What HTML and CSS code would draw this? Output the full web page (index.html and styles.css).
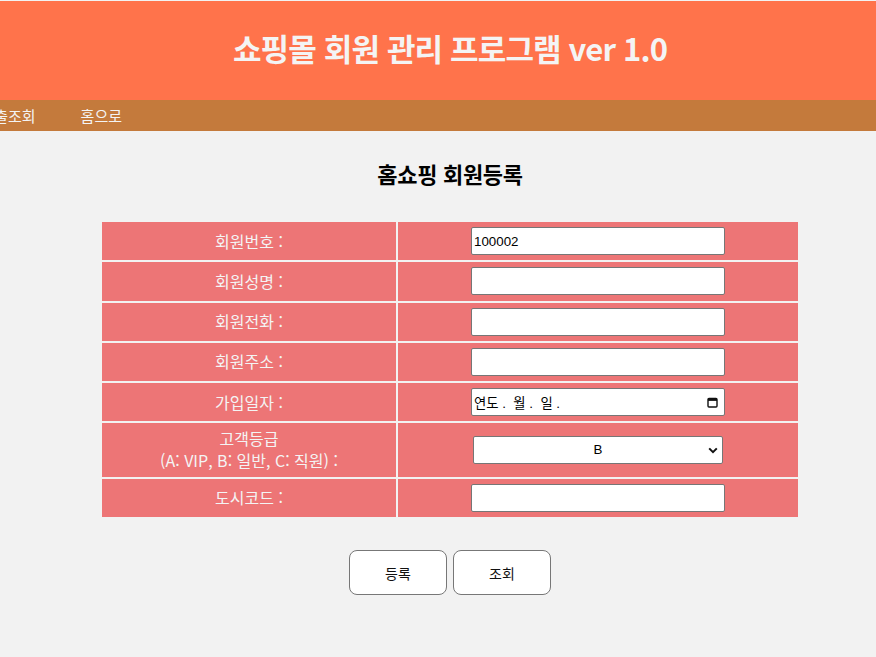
FILE: index.html
```html
<!DOCTYPE html>
<html lang="ko">
<head>
<meta charset="utf-8">
<title>쇼핑몰 회원 관리 프로그램</title>
<link rel="stylesheet" href="styles.css">
</head>
<body>
<div class="page">
  <header class="top">
    <h1 class="title">쇼핑몰 회원 관리 프로그램 ver 1.0</h1>
  </header>
  <nav class="nav">
    <div class="nav-inner">
      <a class="nav-item">회원등록</a>
      <a class="nav-item">회원목록조회/수정</a>
      <a class="nav-item">회원매출조회</a>
      <a class="nav-item">홈으로</a>
    </div>
  </nav>
  <main class="main">
    <h2 class="sub">홈쇼핑 회원등록</h2>
    <form class="form">
      <table class="form-table">
        <tr><th>회원번호 :</th><td><input class="field" type="text" value="100002"></td></tr>
        <tr><th>회원성명 :</th><td><input class="field" type="text"></td></tr>
        <tr><th>회원전화 :</th><td><input class="field" type="text"></td></tr>
        <tr><th>회원주소 :</th><td><input class="field" type="text"></td></tr>
        <tr><th>가입일자 :</th><td>
          <div class="date-wrap">
            <input class="field date-field" type="text" value="연도 .  월 .  일 .">
            <svg class="cal-icon" width="11" height="11" viewBox="0 0 11 11"><rect x="1" y="1.5" width="9" height="8.5" rx="1" fill="none" stroke="#111" stroke-width="1.4"/><rect x="1" y="1.5" width="9" height="2.4" fill="#111"/></svg>
          </div>
        </td></tr>
        <tr><th class="two-line"><span class="line">고객등급</span><span class="line">(A: VIP, B: 일반, C: 직원) :</span></th><td>
          <div class="select-wrap">
            <select class="select">
              <option>A</option>
              <option selected>B</option>
              <option>C</option>
            </select>
            <svg class="chev" width="10" height="7" viewBox="0 0 10 7"><path d="M1.2 1.4 L5 5.2 L8.8 1.4" fill="none" stroke="#111" stroke-width="2"/></svg>
          </div>
        </td></tr>
        <tr><th>도시코드 :</th><td><input class="field" type="text"></td></tr>
      </table>
      <div class="buttons">
        <button class="btn" type="button">등록</button>
        <button class="btn" type="button">조회</button>
      </div>
    </form>
  </main>
</div>
</body>
</html>
```
FILE: styles.css
```css
html {
  overflow: hidden;
  background: #f2f2f2;
}
body {
  margin: 0;
  background: #f2f2f2;
  font-family: "Noto Sans CJK KR", "Noto Sans", sans-serif;
}
.page {
  width: 900px;
  padding-top: 1px;
}
.top {
  height: 99px;
  background: #ff734b;
  display: flex;
  align-items: center;
  justify-content: center;
}
.title {
  margin: 0 0 5px 0;
  font-size: 31px;
  letter-spacing: -0.85px;
  font-weight: 700;
  color: #f4f4f4;
  line-height: 1.2;
}
.nav {
  height: 31px;
  background: #c47a3c;
  overflow: visible;
}
.nav-inner {
  width: 122px;
  height: 31px;
  display: flex;
  justify-content: flex-end;
  gap: 45px;
}
.nav-item {
  flex-shrink: 0;
  white-space: nowrap;
  font-size: 15px;
  line-height: 31px;
  color: #f4f4f4;
}
.main {
  padding-top: 26px;
}
.sub {
  margin: 0 0 31px 0;
  text-align: center;
  font-size: 22px;
  letter-spacing: -0.3px;
  line-height: 32px;
  font-weight: 700;
  color: #000;
}
.form-table {
  width: 700px;
  margin: 0 auto;
  border-spacing: 2px;
}
.form-table th,
.form-table td {
  background: #ed7576;
  padding: 5px 0 5.3px;
}
.form-table th {
  width: 294px;
  font-weight: 400;
  font-size: 16px;
  line-height: 21px;
  color: #f4f4f4;
  text-align: center;
}
.form-table th.two-line {
  line-height: 21.5px;
}
.line {
  display: block;
}
.field {
  display: block;
  margin: 0 auto;
  box-sizing: border-box;
  width: 254px;
  height: 28px;
  padding: 1px 2px;
  border: 1px solid #767676;
  border-radius: 2px;
  background: #fff;
  font-family: "Liberation Sans", "Noto Sans CJK KR", sans-serif;
  font-size: 13.33px;
  color: #000;
}
.date-wrap,
.select-wrap {
  position: relative;
  width: 254px;
  margin: 0 auto;
}
.date-field {
  white-space: pre;
}
.cal-icon {
  position: absolute;
  right: 7px;
  top: 9px;
}
.select {
  display: block;
  margin: 0 auto;
  box-sizing: border-box;
  width: 250px;
  height: 28px;
  border: 1px solid #767676;
  border-radius: 2px;
  background: #fff;
  -webkit-appearance: none;
  appearance: none;
  text-align: center;
  text-align-last: center;
  font-family: "Liberation Sans", sans-serif;
  font-size: 13.33px;
  color: #000;
}
.chev {
  position: absolute;
  right: 7px;
  top: 11px;
  pointer-events: none;
}
.buttons {
  display: flex;
  justify-content: center;
  gap: 6px;
  margin-top: 31px;
}
.btn {
  width: 98px;
  height: 45px;
  border: 1px solid #777;
  border-radius: 8px;
  background: #fff;
  font-family: "Noto Sans CJK KR", sans-serif;
  font-size: 14px;
  color: #111;
}
```
